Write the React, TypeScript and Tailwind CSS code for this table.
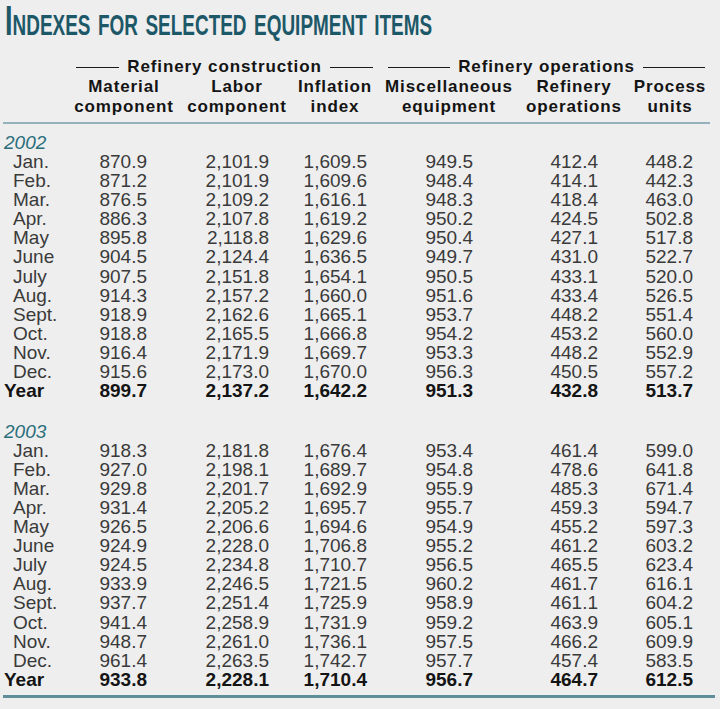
import React, { useLayoutEffect, useRef, useState } from "react";

type Row = [string, string, string, string, string, string, string];

const d2002: Row[] = [
  ["Jan.", "870.9", "2,101.9", "1,609.5", "949.5", "412.4", "448.2"],
  ["Feb.", "871.2", "2,101.9", "1,609.6", "948.4", "414.1", "442.3"],
  ["Mar.", "876.5", "2,109.2", "1,616.1", "948.3", "418.4", "463.0"],
  ["Apr.", "886.3", "2,107.8", "1,619.2", "950.2", "424.5", "502.8"],
  ["May", "895.8", "2,118.8", "1,629.6", "950.4", "427.1", "517.8"],
  ["June", "904.5", "2,124.4", "1,636.5", "949.7", "431.0", "522.7"],
  ["July", "907.5", "2,151.8", "1,654.1", "950.5", "433.1", "520.0"],
  ["Aug.", "914.3", "2,157.2", "1,660.0", "951.6", "433.4", "526.5"],
  ["Sept.", "918.9", "2,162.6", "1,665.1", "953.7", "448.2", "551.4"],
  ["Oct.", "918.8", "2,165.5", "1,666.8", "954.2", "453.2", "560.0"],
  ["Nov.", "916.4", "2,171.9", "1,669.7", "953.3", "448.2", "552.9"],
  ["Dec.", "915.6", "2,173.0", "1,670.0", "956.3", "450.5", "557.2"],
];
const y2002: Row = ["Year", "899.7", "2,137.2", "1,642.2", "951.3", "432.8", "513.7"];

const d2003: Row[] = [
  ["Jan.", "918.3", "2,181.8", "1,676.4", "953.4", "461.4", "599.0"],
  ["Feb.", "927.0", "2,198.1", "1,689.7", "954.8", "478.6", "641.8"],
  ["Mar.", "929.8", "2,201.7", "1,692.9", "955.9", "485.3", "671.4"],
  ["Apr.", "931.4", "2,205.2", "1,695.7", "955.7", "459.3", "594.7"],
  ["May", "926.5", "2,206.6", "1,694.6", "954.9", "455.2", "597.3"],
  ["June", "924.9", "2,228.0", "1,706.8", "955.2", "461.2", "603.2"],
  ["July", "924.5", "2,234.8", "1,710.7", "956.5", "465.5", "623.4"],
  ["Aug.", "933.9", "2,246.5", "1,721.5", "960.2", "461.7", "616.1"],
  ["Sept.", "937.7", "2,251.4", "1,725.9", "958.9", "461.1", "604.2"],
  ["Oct.", "941.4", "2,258.9", "1,731.9", "959.2", "463.9", "605.1"],
  ["Nov.", "948.7", "2,261.0", "1,736.1", "957.5", "466.2", "609.9"],
  ["Dec.", "961.4", "2,263.5", "1,742.7", "957.7", "457.4", "583.5"],
];
const y2003: Row = ["Year", "933.8", "2,228.1", "1,710.4", "956.7", "464.7", "612.5"];

const gridCols = "grid grid-cols-[76px_67px_122px_98px_106px_125px_95px]";
const headCols = "grid grid-cols-[66px_108px_118px_78px_150px_100px_92px]";

function DataRow({ r }: { r: Row }) {
  return (
    <div className={`${gridCols} h-[19.1px] leading-[19.1px] text-[19px] text-[#3a3a3a]`}>
      <div className="pl-[9px] whitespace-nowrap">{r[0]}</div>
      {r.slice(1).map((v, i) => (
        <div key={i} className="text-right whitespace-nowrap">
          {v}
        </div>
      ))}
    </div>
  );
}

function YearRow({ r }: { r: Row }) {
  return (
    <div className={`${gridCols} h-[19.1px] leading-[19.1px] text-[19px] font-bold text-[#141414]`}>
      <div className="whitespace-nowrap">{r[0]}</div>
      {r.slice(1).map((v, i) => (
        <div key={i} className="text-right whitespace-nowrap">
          {v}
        </div>
      ))}
    </div>
  );
}

function Group({ title, className }: { title: string; className: string }) {
  return (
    <div className={`flex items-center gap-[8px] ${className}`}>
      <div className="flex-1 h-[1.5px] bg-[#1a1a1a] mt-[2px]" />
      <div className="whitespace-nowrap">{title}</div>
      <div className="flex-1 h-[1.5px] bg-[#1a1a1a] mt-[2px]" />
    </div>
  );
}

const heads: [string, string][] = [
  ["Material", "component"],
  ["Labor", "component"],
  ["Inflation", "index"],
  ["Miscellaneous", "equipment"],
  ["Refinery", "operations"],
  ["Process", "units"],
];

function Title() {
  const ref = useRef<HTMLSpanElement>(null);
  const [sx, setSx] = useState(0.82);
  useLayoutEffect(() => {
    if (ref.current) {
      const w = ref.current.offsetWidth;
      if (w > 0) setSx(427 / w);
    }
  }, []);
  return (
    <div className="flex h-[40px] pl-[5px] whitespace-nowrap">
      <span
        ref={ref}
        className="block leading-[37px] origin-top-left text-[40px] font-bold text-[#1d5868] [font-variant-caps:small-caps]"
        style={{
          fontFamily: '"Liberation Sans Narrow", "Liberation Sans", Arial, sans-serif',
          scale: `${sx} 1.08`,
        }}
      >
        Indexes for selected equipment items
      </span>
    </div>
  );
}

export default function App() {
  return (
    <div
      className="w-[720px] h-[709px] bg-[#eeeeee] overflow-hidden"
      style={{ fontFamily: '"Liberation Sans", Arial, sans-serif' }}
    >
      <Title />

      <div className="pt-[16.5px] text-[17px] font-bold tracking-[0.9px] text-[#141414] leading-[20px]">
        <div className="flex h-[20px]">
          <Group title="Refinery construction" className="ml-[76px] w-[297px]" />
          <Group title="Refinery operations" className="ml-[15px] w-[317px]" />
        </div>
        <div className={`${headCols} pl-[4px]`}>
          <div />
          {heads.map(([a], i) => (
            <div key={i} className="flex justify-center whitespace-nowrap">
              {a}
            </div>
          ))}
        </div>
        <div className={`${headCols} pl-[4px]`}>
          <div />
          {heads.map(([, b], i) => (
            <div key={i} className="flex justify-center whitespace-nowrap">
              {b}
            </div>
          ))}
        </div>
      </div>

      <div className="mt-[5.5px] ml-[3px] w-[707px] h-[2px] bg-[#93b2bb]" />

      <div className="pl-[4px] pt-[10px]">
        <div className="h-[18px] leading-[18px] text-[19px] italic text-[#2b6e7c]">2002</div>
        {d2002.map((r) => (
          <DataRow key={r[0]} r={r} />
        ))}
        <YearRow r={y2002} />

        <div className="mt-[22.5px] h-[18px] leading-[18px] text-[19px] italic text-[#2b6e7c]">2003</div>
        {d2003.map((r) => (
          <DataRow key={r[0] + "b"} r={r} />
        ))}
        <YearRow r={y2003} />
      </div>

      <div className="mt-[6.5px] ml-[3px] w-[712px] h-[3px] bg-[#5f8e99]" />
    </div>
  );
}
